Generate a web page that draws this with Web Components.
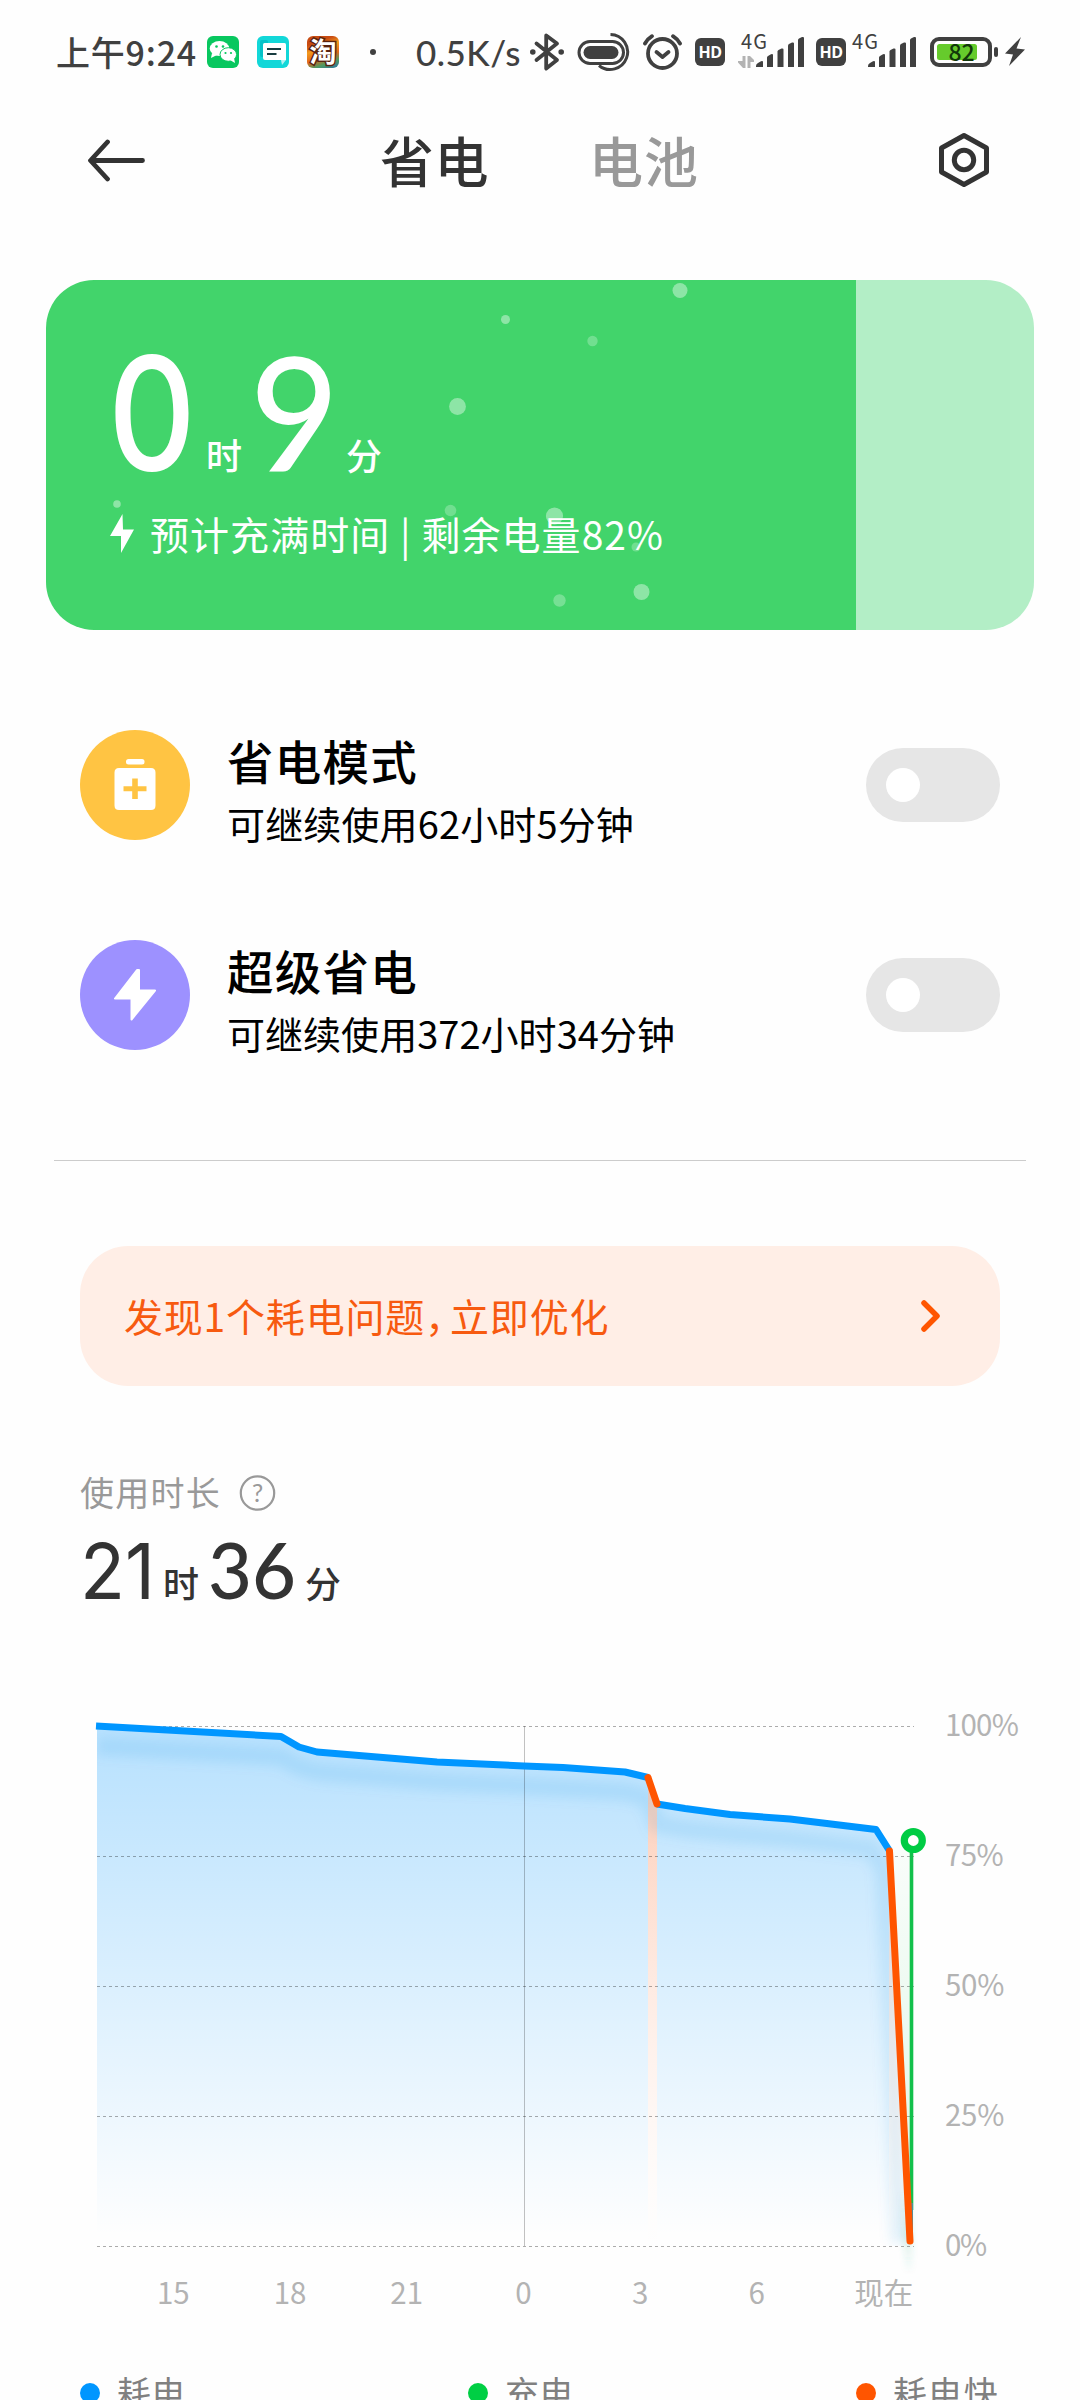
<!DOCTYPE html>
<html lang="zh-CN">
<head>
<meta charset="utf-8">
<title>省电</title>
<style>
html,body{margin:0;padding:0}
body{width:1080px;height:2400px;overflow:hidden;background:#fefefe;font-family:"Noto Sans CJK SC","Noto Sans",sans-serif;color:#333}
</style>
</head>
<body>
<battery-page></battery-page>
<script>
const define = (name, html, ready) => {
  const t = document.createElement('template');
  t.innerHTML = html;
  customElements.define(name, class extends HTMLElement {
    connectedCallback() {
      if (this.shadowRoot) return;
      this.attachShadow({ mode: 'open' }).appendChild(t.content.cloneNode(true));
      if (ready) ready(this, this.shadowRoot);
    }
  });
};

// A single line of text whose advance width is set by "w":
// spacing is spread between the letters, or the glyphs are condensed with "squeeze".
define('fit-text', `<style>
:host{display:block;flex:none;white-space:nowrap;line-height:1}
span{display:inline-block;transform-origin:0 50%}
</style><span></span>`, (el, root) => {
  const s = root.querySelector('span');
  s.textContent = el.getAttribute('text');
  const w = parseFloat(el.getAttribute('w'));
  if (!w) return;
  const nat = s.getBoundingClientRect().width;
  if (el.hasAttribute('squeeze')) s.style.transform = `scaleX(${w / nat})`;
  else s.style.letterSpacing = (w - nat) / [...s.textContent].length + 'px';
  el.style.width = w + 'px';
});

define('hd-badge', `<style>:host{display:block;flex:none;width:30px;height:28px}
div{width:30px;height:28px;border-radius:6px;background:#404040;color:#fff;font:700 16px/28px "Open Sans",sans-serif;text-align:center;letter-spacing:-.6px}</style><div>HD</div>`);

define('signal-bars', `<style>:host{display:block;flex:none;width:48px;height:32px}svg{display:block}</style>
<svg width="48" height="32" viewBox="0 0 48 32" fill="#404040">
<path d="M0 31V30Q0 28 2 27L5 25.300Q7 24.500 7 26V31z"/><path d="M11 31V21.500Q11 20.500 12 20L15 18.200Q17 17.500 17 19V31z"/>
<path d="M21.500 31V15.500Q21.500 14.500 22.500 14L25.500 12.500Q27.500 12 27.500 13.500V31z"/><path d="M32 31V9.500Q32 8.500 33 8L36 6.500Q38 6 38 7.500V31z"/>
<path d="M42 31V4Q42 3 43 2.500L46 1Q48 .5 48 2V31z"/></svg>`);

define('status-bar', `<style>
:host{display:flex;height:104px;align-items:center;color:#404040;box-sizing:border-box}
svg{display:block;flex:none}
.time{margin-left:56px;font-size:34px;font-weight:500}
.tb{flex:none;width:32px;height:32px;margin-left:18px;border-radius:6px;background:linear-gradient(160deg,#c84b12 0 22%,#f39a1d 40%,#e0661a 62%,#4e9a62 80%,#2873a8)}
.tb span{display:block;font-size:27px;font-weight:700;line-height:30px;width:32px;text-align:center;color:#fff;-webkit-text-stroke:3px #5a2410;paint-order:stroke fill}
.g{display:flex;flex-direction:column;flex:none;width:27px;height:42px;font:400 20px/20px "Noto Sans CJK SC",sans-serif}
</style>
<fit-text class="time" text="上午9:24" w="141"></fit-text>
<svg style="margin-left:10px" width="32" height="32" viewBox="0 0 32 32"><rect width="32" height="32" rx="6" fill="#08c75f"/>
<ellipse cx="12.500" cy="12.500" rx="9.800" ry="7.600" fill="#fff"/><path d="M5 17l-1 5 6-3z" fill="#fff"/><circle cx="9.500" cy="10.500" r="1.300" fill="#08c75f"/><circle cx="16" cy="10.500" r="1.300" fill="#08c75f"/>
<ellipse cx="21.300" cy="18.500" rx="8.300" ry="6.800" fill="#fff" stroke="#08c75f" stroke-width="1"/><path d="M23 24l5 3-1-5z" fill="#fff"/><circle cx="18.500" cy="17" r="1.100" fill="#08c75f"/><circle cx="24" cy="17" r="1.100" fill="#08c75f"/></svg>
<svg style="margin-left:18px" width="32" height="32" viewBox="0 0 32 32"><rect width="32" height="32" rx="6" fill="#12d7d8"/><rect x="3" y="4" width="8" height="17" rx="2" fill="#05c2c8"/>
<path d="M6 8.500Q6 7 7.500 7H27.500Q29 7 29 8.500V24H8Q6 24 6 22z" fill="#fff"/><path d="M24 24h5l-4 5z" fill="#b3f1f1"/><path d="M10 13h14M10 18h9.500" stroke="#183c40" stroke-width="2.200"/></svg>
<div class="tb"><span>淘</span></div>
<svg style="margin-left:31px" width="6" height="6"><circle cx="3" cy="3" r="3" fill="#404040"/></svg>
<fit-text style="margin-left:40px;font-size:35px;font-family:Lato,sans-serif;font-weight:500" text="0.5K/s" w="105"></fit-text>
<svg style="margin-left:8px" width="36" height="40" viewBox="0 0 36 40" fill="none" stroke="#404040" stroke-width="3.800" stroke-linejoin="round" stroke-linecap="round"><path d="M7.500 11.500L28 28 17.200 36.500V3.500L28 11.500 7.500 28"/><circle cx="3.800" cy="20" r="1.800" fill="#404040" stroke-width="2"/><circle cx="32.200" cy="20" r="1.800" fill="#404040" stroke-width="2"/></svg>
<svg style="margin-left:12px" width="54" height="40" viewBox="0 0 54 40" fill="none" stroke="#404040" stroke-width="3"><rect x="2" y="9.500" width="44.500" height="22" rx="11"/><rect x="6.500" y="14" width="35" height="13" rx="6.500" fill="#404040" stroke="none"/><path d="M33.500 2.500A17.500 17.500 0 1 1 22 33.500" stroke-width="3"/></svg>
<svg style="margin-left:12px" width="40" height="40" viewBox="0 0 40 40" fill="none" stroke="#404040" stroke-width="3.800" stroke-linecap="round"><circle cx="19.500" cy="21.500" r="14.500"/><path d="M13.500 20l6 5 6-5" stroke-linejoin="round"/><path d="M2 11.500Q4.500 7 9 4.200M37 11.500Q34.500 7 30 4.200"/></svg>
<hd-badge style="margin-left:12px"></hd-badge>
<svg style="margin:20px 0 0 13px" width="16" height="12" viewBox="0 0 16 12" fill="#b3b3b3"><path d="M7.500 0V12H5L0 6.500V5H4.500V0zM9.500 12V0H12L16 4V6H12.500V12z"/></svg>
<div class="g" style="margin-left:-13px"><fit-text text="4G" w="27"></fit-text></div>
<signal-bars style="margin-left:-12px"></signal-bars>
<hd-badge style="margin-left:12px"></hd-badge>
<div class="g" style="margin-left:6px"><fit-text text="4G" w="27"></fit-text></div>
<signal-bars style="margin-left:-11px"></signal-bars>
<svg style="margin-left:14px" width="69" height="30" viewBox="0 0 69 30"><rect x="2" y="2" width="58" height="26" rx="7" fill="none" stroke="#404040" stroke-width="4"/><rect x="7" y="7" width="40" height="16" rx="2.500" fill="#66cb2c"/><rect x="64" y="10" width="4" height="10" rx="2" fill="#404040"/><text x="18.500" y="23.500" font-size="23" font-weight="500" fill="#12380a" textLength="26">82</text></svg>
<svg style="margin-left:6px" width="20" height="30" viewBox="0 0 20 30"><path d="M16 0L0 16.500 8 17.500 4 29 20 12.500 11.500 11.500z" fill="#404040"/></svg>
`);

define('title-bar', `<style>
:host{display:flex;height:112px;align-items:center;font-size:54px;font-weight:500}
svg{display:block;flex:none}.off{color:#999}
</style>
<svg style="margin-left:86px" width="60" height="44" viewBox="0 0 60 44" fill="none" stroke="#333" stroke-width="4.800" stroke-linecap="round" stroke-linejoin="round"><path d="M21.500 4L4.500 22.500 21.500 41M5 22.500H56.500"/></svg>
<fit-text style="margin-left:234px" text="省电" w="109"></fit-text>
<fit-text class="off" style="margin-left:100px" text="电池" w="110"></fit-text>
<svg style="margin-left:238px" width="54" height="56" viewBox="0 0 54 56" fill="none" stroke="#333" stroke-width="5"><path d="M27 3.500L49.500 16V40L27 52.500 4.500 40V16z" stroke-linejoin="round"/><circle cx="27" cy="28" r="9.700"/></svg>`);

define('charge-card', `<style>
:host{display:block;position:relative;margin:64px 46px 0;height:350px;border-radius:48px;overflow:hidden;background:linear-gradient(90deg,#42d46b 810px,#b3eec6 810px);color:#fff}
.big{display:flex;align-items:flex-end;height:204px;padding-left:62px}
.n{font-family:Inter,sans-serif;font-size:158px;font-weight:500;margin-bottom:-8px}
.l{font-family:Lato,sans-serif;font-weight:500;margin-bottom:-4.500px}
.u{font-size:36px;font-weight:500;margin-bottom:12px}
.line{display:flex;align-items:center;height:40px;margin-top:29px;padding-left:64px;font-size:39px}
.dots{position:absolute;left:0;top:0;display:block}
</style>
<div class="big"><fit-text class="n" squeeze text="0" w="88"></fit-text><fit-text class="u" style="margin-left:10px" text="时" w="36"></fit-text>
<fit-text class="n l" squeeze style="margin-left:8px" text="9" w="89"></fit-text><fit-text class="u" style="margin-left:7px" text="分" w="36"></fit-text></div>
<div class="line"><svg width="24" height="39" viewBox="0 0 24 39"><path d="M12.500 0L0 22H11V39L24 15.500H13z" fill="#fff"/></svg><fit-text style="margin-left:16px" text="预计充满时间 | 剩余电量82%" w="514"></fit-text></div>
<svg class="dots" width="800" height="350" fill="#fff"><circle cx="634" cy="10.500" r="7.500" opacity=".4"/><circle cx="459.500" cy="39.500" r="4.500" opacity=".4"/><circle cx="546.500" cy="61" r="5.200" opacity=".25"/><circle cx="411.500" cy="126.500" r="8.400" opacity=".4"/><circle cx="71" cy="224" r="3.800" opacity=".4"/><circle cx="404.500" cy="230.500" r="5.800" opacity=".25"/><circle cx="508.500" cy="236" r="8.600" opacity=".4"/><circle cx="590" cy="267" r="4.500" opacity=".25"/><circle cx="595.500" cy="312" r="8" opacity=".4"/><circle cx="513.500" cy="320.500" r="6.200" opacity=".28"/></svg>`);

define('mi-switch', `<style>:host{display:flex;flex:none;align-items:center;box-sizing:border-box;width:134px;height:74px;border-radius:37px;background:#e6e6e6;padding-left:20px}i{width:34px;height:34px;border-radius:50%;background:#fff}</style><i></i>`);

define('mode-row', `<style>
:host{display:flex;height:110px;margin:100px 80px 0;align-items:center;color:#000}
.ic{flex:none;width:110px;height:110px;border-radius:50%;background:var(--tint);display:flex;align-items:center;justify-content:center}
.tx{flex:1;padding-left:37px;height:110px;box-sizing:border-box;padding-top:7px}
.t{font-size:46.500px;font-weight:500}.s{font-size:38px;margin-top:20px}
</style><div class="ic"><slot></slot></div>
<div class="tx"><fit-text class="t" w="191"></fit-text><fit-text class="s"></fit-text></div><mi-switch></mi-switch>`);

define('issue-banner', `<style>
:host{display:flex;height:140px;margin:85px 80px 0;border-radius:48px;background:#ffeee6;color:#f75a10;align-items:center;font-size:39px}
div{flex:none;width:488px;margin:-2px 0 0 44px;line-height:1;letter-spacing:.8px;white-space:nowrap}
.c{letter-spacing:-14px}
svg{display:block;margin-left:309px;margin-top:-1px}
</style><div>发现1个耗电问题<span class="c">，</span>立即优化</div>
<svg width="20" height="34" viewBox="0 0 20 34"><path d="M3 4L16 17 3 30" fill="none" stroke="#ff5500" stroke-width="5.500" stroke-linecap="round" stroke-linejoin="round"/></svg>`);

define('usage-time', `<style>
:host{display:block;padding:87px 0 0 80px}
.a{display:flex;align-items:center;height:40px;color:#999;font-size:34px}
.b{display:flex;align-items:flex-end;height:100px;color:#333}
.n{font-family:Inter,sans-serif;font-size:77px;font-weight:400;margin-bottom:3px}
.l{font-family:Lato,sans-serif;font-weight:500;margin-bottom:5px}
.u{font-size:36px;font-weight:500;margin-bottom:13px}
svg{display:block;margin-left:18px}
</style>
<div class="a"><fit-text text="使用时长" w="141" style="margin-top:-2px"></fit-text><svg width="38" height="38" viewBox="0 0 38 38"><circle cx="18.500" cy="19" r="16.700" fill="none" stroke="#999" stroke-width="2.200"/><text x="18.500" y="28" font-size="25" font-family="Lato" text-anchor="middle" fill="#999">?</text></svg></div>
<div class="b"><fit-text class="n" squeeze text="21" w="75"></fit-text><fit-text class="u" text="时" w="36" style="margin-left:8px"></fit-text><fit-text class="n l" squeeze text="36" w="88" style="margin-left:9px"></fit-text><fit-text class="u" text="分" w="36" style="margin-left:9px"></fit-text></div>`);

define('battery-chart', `<style>
:host{display:block;color:#b3b3b3;font-size:29.500px}
.p{display:flex;height:580px}.p>svg{display:block;flex:none}
.y{display:flex;flex-direction:column;gap:100px;padding:29px 0 0 15px}
.y fit-text{height:30px}.x{display:flex;height:34px;padding-left:115px;margin-top:17px}
.x fit-text{width:116.700px;text-align:center}.x .now{width:auto}
</style>
<div class="p"><svg width="930" height="580" viewBox="0 1680 930 580" overflow="visible">
<defs>
<linearGradient id="bl" gradientUnits="userSpaceOnUse" x1="0" y1="1726" x2="0" y2="2236"><stop offset="0" stop-color="#0096ff" stop-opacity=".28"/><stop offset="1" stop-color="#0096ff" stop-opacity="0"/></linearGradient>
<linearGradient id="rd" gradientUnits="userSpaceOnUse" x1="0" y1="1790" x2="0" y2="2246"><stop offset="0" stop-color="#fdceb9"/><stop offset="1" stop-color="#ffefe8" stop-opacity="0"/></linearGradient>
<linearGradient id="sh" gradientUnits="userSpaceOnUse" x1="0" y1="2190" x2="0" y2="2274"><stop offset="0" stop-color="#35b28c" stop-opacity="0"/><stop offset=".55" stop-color="#35b28c" stop-opacity=".15"/><stop offset="1" stop-color="#35b28c" stop-opacity="0"/></linearGradient>
<linearGradient id="gr" gradientUnits="userSpaceOnUse" x1="0" y1="1850" x2="0" y2="2246"><stop offset="0" stop-color="#00c040" stop-opacity=".02"/><stop offset="1" stop-color="#00c040" stop-opacity=".14"/></linearGradient>
<clipPath id="cl"><path d="M97 1726L281 1736 299 1747 317 1752 437 1762 524 1766 563 1767.500 625 1772 648 1777.500 657 1805 685 1808.500 730 1814.500 790 1819 876 1829.500 889 1850 910 2243V2246H97z"/></clipPath>
<filter id="bf" x="-10%" y="-50%" width="120%" height="220%"><feGaussianBlur stdDeviation="6"/></filter>
<filter id="b2" x="-100%" y="-10%" width="300%" height="120%"><feGaussianBlur stdDeviation="2.500 0.500"/></filter>
</defs>
<path fill="url(#bl)" d="M97 1726L281 1736 299 1747 317 1752 437 1762 524 1766 563 1767.500 625 1772 648 1777.500V2246H97zM657 1805L685 1808.500 730 1814.500 790 1819 876 1829.500 889 1850V2246H657z"/>
<path fill="url(#rd)" d="M648 1777.500L657 1805V2246H648z"/>
<path fill="url(#rd)" d="M889 1850L910 2243H889z"/><path fill="url(#gr)" d="M889 1850H911V2246z"/>
<g clip-path="url(#cl)"><path d="M97 1746L281 1757 299 1767 317 1772 437 1782 524 1786 625 1792 648 1798 657 1824 685 1829 730 1834 790 1839 872 1849 884 1870 900 2243" fill="none" stroke="#008ad8" stroke-opacity=".11" stroke-width="18" filter="url(#bf)"/></g>
<path d="M899 2190H913V2274H905z" fill="url(#sh)" filter="url(#b2)"/>
<g stroke="#000" stroke-opacity=".32" stroke-width="1" stroke-dasharray="3 3"><path d="M97 1726.500H914M97 1856.500H914M97 1986.500H914M97 2116.500H914M97 2246.500H914"/></g>
<path d="M524.500 1726V2246" stroke="#000" stroke-opacity=".24"/>
<g fill="none" stroke-width="7" stroke-linejoin="round"><path stroke="#0096ff" d="M96 1726L281 1736.500 299 1747 317 1752 437 1762 524 1766 563 1767.500 625 1772 648 1777.500M657 1804L685 1808.500 730 1814.500 790 1819 876 1829.500 889 1850"/>
<path stroke="#12c04b" stroke-width="3.600" d="M911.500 1850V2210"/><path stroke="#4e8f9c" stroke-width="3" d="M911.500 2203V2240"/>
<path stroke="#ff5500" stroke-linecap="round" d="M648 1777.500L657 1804M889.500 1851L910 2241"/></g>
<circle cx="913.300" cy="1840.500" r="9" fill="#fff" stroke="#00cc44" stroke-width="7.200"/>
</svg>
<div class="y"><fit-text text="100%" w="73"></fit-text><fit-text text="75%" w="58"></fit-text><fit-text text="50%" w="59"></fit-text><fit-text text="25%" w="59"></fit-text><fit-text text="0%" w="41"></fit-text></div></div>
<div class="x"><fit-text text="15"></fit-text><fit-text text="18"></fit-text><fit-text text="21"></fit-text><fit-text text="0"></fit-text><fit-text text="3"></fit-text><fit-text text="6"></fit-text><fit-text class="now" style="margin-left:39px" text="现在"></fit-text></div>`);

define('chart-legend', `<style>
:host{display:flex;height:40px;margin-left:80px;color:#808080;font-size:34px}
div{display:flex;width:388px}i{width:20px;height:20px;border-radius:50%;margin:8px 17px 0 0}
</style><div><i style="background:#0096ff"></i><fit-text text="耗电" w="69"></fit-text></div><div><i style="background:#00cf44"></i><fit-text text="充电" w="69"></fit-text></div><div style="width:auto"><i style="background:#ff5500"></i><fit-text text="耗电快" w="106"></fit-text></div>`);

define('battery-page', `<style>:host{display:block;width:1080px;height:2400px;overflow:hidden}
hr{border:0;height:1px;background:#ccc;margin:110px 54px 0}
.r2{margin-top:100px}</style>
<status-bar></status-bar><title-bar></title-bar><charge-card></charge-card>
<mode-row style="--tint:#ffc443" title="省电模式" note="可继续使用62小时5分钟" note-width="407"><svg width="42" height="54" viewBox="0 0 42 54" fill="#fff"><rect x="12" y="1" width="18.500" height="5.500" rx="2.500"/><path fill-rule="evenodd" d="M5 10H37Q41.500 10 41.500 14.500V47.500Q41.500 52 37 52H5Q.5 52 .5 47.500V14.500Q.5 10 5 10zM18.200 20.500V28.200H9.500V33.200H18.200V41H23.800V33.200H32.500V28.200H23.800V20.500z"/></svg></mode-row>
<mode-row class="r2" style="--tint:#9d91ff" title="超级省电" note="可继续使用372小时34分钟" note-width="448"><svg width="44" height="54" viewBox="0 0 44 54"><path d="M24 2L2 30.500H18.500V51.500L42 22.500H26V2z" fill="#fff" stroke="#fff" stroke-width="2" stroke-linejoin="round"/></svg></mode-row>
<hr><issue-banner></issue-banner><usage-time></usage-time><battery-chart style="margin-top:67px"></battery-chart><chart-legend style="margin-top:64px"></chart-legend>`,
(el, r) => {
  for (const row of r.querySelectorAll('mode-row')) {
    const [t, s] = row.shadowRoot.querySelectorAll('fit-text');
    const fit = (f, text, w) => {
      const sp = f.shadowRoot.querySelector('span');
      sp.style.letterSpacing = '0px'; sp.textContent = text;
      sp.style.letterSpacing = (w - sp.getBoundingClientRect().width) / [...text].length + 'px';
    };
    fit(t, row.getAttribute('title'), 191);
    fit(s, row.getAttribute('note'), +row.getAttribute('note-width'));
  }
});
</script>
</body>
</html>
